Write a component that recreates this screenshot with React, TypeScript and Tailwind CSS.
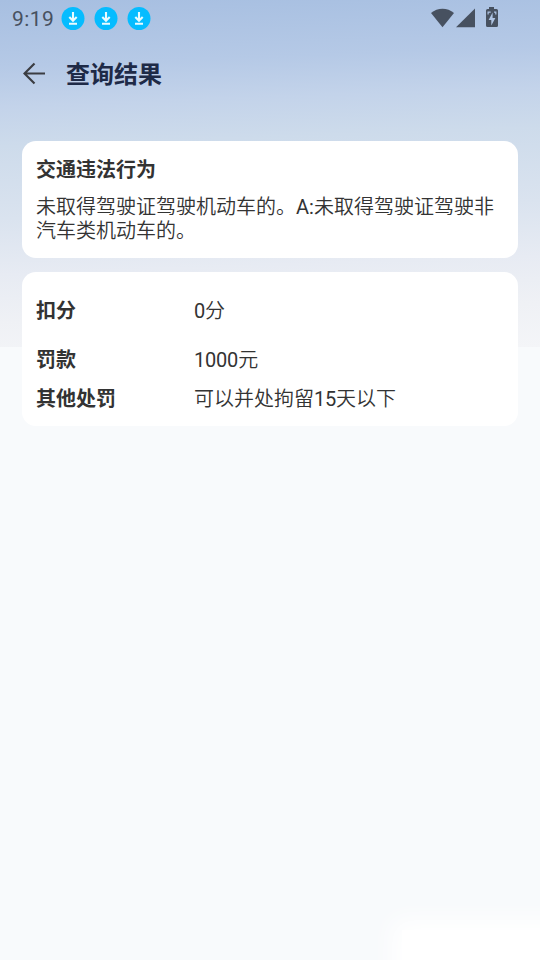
import type { ReactNode } from "react";

const details = [
  { label: "扣分", number: "0", before: "", after: "分", className: "mt-[27px]" },
  { label: "罚款", number: "1000", before: "", after: "元", className: "mt-[25px]" },
  { label: "其他处罚", number: "15", before: "可以并处拘留", after: "天以下", className: "mt-[15px]" },
];

function DownloadBadge() {
  return (
    <svg viewBox="0 0 24 24" className="size-6">
      <circle cx="12" cy="11.500" r="11.5" fill="#05bcff" />
      <path
        d="M12 5v8.500M8.300 10l3.700 3.700 3.700-3.700M8 16.800h8"
        fill="none"
        stroke="#e9fbff"
        strokeWidth="2.1"
      />
    </svg>
  );
}

function StatusBar() {
  return (
    <div className="flex h-9 items-center justify-between pl-3 pr-[42px] text-[#475160]">
      <div className="flex items-center pt-px">
        <span className="w-[49px] text-[21px] leading-6 tracking-[0.4px]">9:19</span>
        <div className="flex gap-[9px]">
          <DownloadBadge />
          <DownloadBadge />
          <DownloadBadge />
        </div>
      </div>
      <svg viewBox="0 0 68 22" className="h-[22px] w-[68px]" fill="currentColor">
        <path d="M1 6C7.500.3 17.500.3 24 6L12.500 20.300z" />
        <path d="M45 1.500v18.700H26z" />
        <path
          fillRule="evenodd"
          d="M59 0h5v2h2.500q1.500 0 1.500 1.500v15q0 1.500-1.500 1.500h-9q-1.500 0-1.500-1.500v-15Q56 2 57.500 2H59zM62.600 5.500l-4 7.500h2.700v5.500l4.100-7.500h-2.800zM57.500 4.500v3h1.200V5.700h2V4.500zM64 4.500v1.200h1.200v1.800h1.200v-3z"
        />
      </svg>
    </div>
  );
}

function Card({ children, className }: { children: ReactNode; className: string }) {
  return (
    <section className={`rounded-[14px] bg-white px-[14px] text-xl leading-6 text-[#333333] ${className}`}>
      {children}
    </section>
  );
}

export default function App() {
  return (
    <main className="relative h-[960px] w-[540px] overflow-hidden bg-[#f8fafc] font-[Roboto,'Noto_Sans_CJK_SC',sans-serif]">
      <div className="absolute inset-x-0 top-0 h-[347px] bg-[linear-gradient(178deg,#a7bfe1_0%,#b5c9e6_18%,#c3d3ea_29%,#cddbeb_40%,#dae3ef_60%,#e7ebf3_75%,#eff1f5_88%,#f4f5f8_100%)]" />
      <div className="absolute -bottom-10 -right-10 h-[70px] w-[178px] bg-white shadow-[0_0_24px_10px_#ffffff]" />

      <div className="relative">
        <StatusBar />

        <header className="flex h-[76px] items-center pl-[23px]">
          <svg
            viewBox="0 0 24 24"
            className="size-6"
            fill="none"
            stroke="#3b3d42"
            strokeWidth="2.2"
          >
            <path d="M22 11.500H1.500M11.500 1.500l-10 10 10 10" />
          </svg>
          <h1 className="ml-[19px] pt-0.5 text-2xl font-semibold text-[#1e2a47]">查询结果</h1>
        </header>

        <div className="mx-[22px] mt-[29px] flex flex-col gap-[14px]">
          <Card className="h-[117px] pt-[17px]">
            <h2 className="font-bold">交通违法行为</h2>
            <div className="mt-[13px] font-[350]">
              <p className="flex whitespace-nowrap">
                <span>未取得驾驶证驾驶机动车的。</span>
                <span className="font-normal">A:</span>
                <span>未取得驾驶证驾驶非</span>
              </p>
              <p>汽车类机动车的。</p>
            </div>
          </Card>

          <Card className="flow-root h-[154px]">
            {details.map((item) => (
              <dl key={item.label} className={`flex ${item.className}`}>
                <dt className="w-[158px] font-bold">{item.label}</dt>
                <dd className="font-[350]">
                  {item.before}
                  <span className="font-normal tracking-[-0.2px]">{item.number}</span>
                  {item.after}
                </dd>
              </dl>
            ))}
          </Card>
        </div>
      </div>
    </main>
  );
}
